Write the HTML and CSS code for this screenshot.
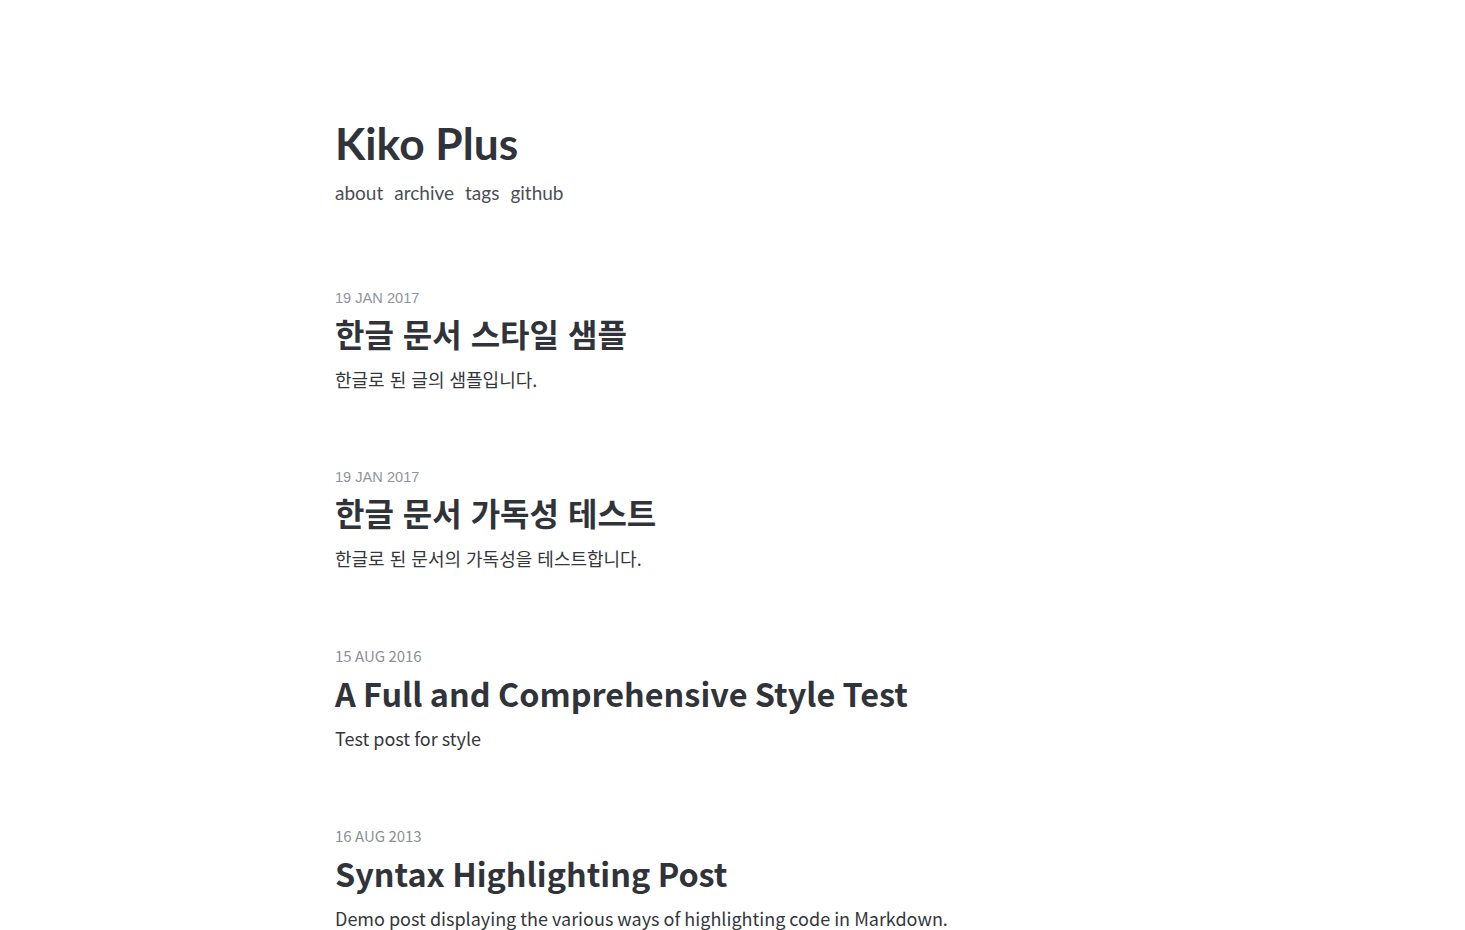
FILE: index.html
```html
<!DOCTYPE html>
<html lang="en">
<head>
<meta charset="utf-8">
<title>Kiko Plus</title>
<link rel="stylesheet" href="styles.css">
</head>
<body>
<div class="container">
  <header class="site-header">
    <h1 class="site-title">Kiko Plus</h1>
    <nav class="site-nav">
      <a href="#">about</a>
      <a href="#">archive</a>
      <a href="#">tags</a>
      <a href="#">github</a>
    </nav>
  </header>
  <main class="posts">
    <article class="post post-ko" lang="ko">
      <div class="post-date">19 JAN 2017</div>
      <h2 class="post-title">한글 문서 스타일 샘플</h2>
      <p class="post-desc">한글로 된 글의 샘플입니다.</p>
    </article>
    <article class="post post-ko" lang="ko">
      <div class="post-date">19 JAN 2017</div>
      <h2 class="post-title">한글 문서 가독성 테스트</h2>
      <p class="post-desc">한글로 된 문서의 가독성을 테스트합니다.</p>
    </article>
    <article class="post post-en">
      <div class="post-date">15 AUG 2016</div>
      <h2 class="post-title">A Full and Comprehensive Style Test</h2>
      <p class="post-desc">Test post for style</p>
    </article>
    <article class="post post-en">
      <div class="post-date">16 AUG 2013</div>
      <h2 class="post-title">Syntax Highlighting Post</h2>
      <p class="post-desc">Demo post displaying the various ways of highlighting code in Markdown.</p>
    </article>
  </main>
</div>
</body>
</html>
```

FILE: styles.css
```css
html, body {
  margin: 0;
  padding: 0;
  background: #ffffff;
}

body {
  font-family: "Noto Sans CJK KR", "Noto Sans", sans-serif;
  color: #333333;
}

.container {
  width: 795px;
  margin: 0 auto;
  padding-top: 118px;
}

.site-header {
  display: flex;
  flex-direction: column;
}

.site-title {
  margin: 0;
  font-family: Lato, "Noto Sans CJK KR", sans-serif;
  font-weight: 700;
  font-size: 44.3px;
  line-height: 50px;
  color: #30343a;
}

.site-nav {
  display: flex;
  gap: 11px;
  margin-top: 13px;
  font-family: Lato, sans-serif;
  font-size: 19px;
  line-height: 24px;
}

.site-nav a {
  color: #4a4f55;
  text-decoration: none;
}

.posts {
  display: flex;
  flex-direction: column;
  margin-top: 83px;
}

.post {
  display: flex;
  flex-direction: column;
  margin-bottom: 74px;
}

.post-date {
  font-size: 15px;
  line-height: 20px;
  color: #8a9096;
}

.post-title {
  margin: 0;
  font-weight: 700;
  color: #30343a;
}

.post-desc {
  margin: 0;
  font-size: 18px;
  line-height: 28px;
  color: #33373c;
}

.post-ko .post-date {
  font-family: "Liberation Sans", Arial, sans-serif;
  font-size: 14.6px;
  color: #8f959b;
}

.post-ko .post-title {
  font-size: 32px;
  line-height: 40px;
  margin-top: 5px;
}

.post-ko .post-desc {
  margin-top: 12px;
}

.post-en .post-title {
  font-size: 32.4px;
  line-height: 40px;
  margin-top: 7px;
}

.post-en .post-desc {
  margin-top: 11px;
}
```
